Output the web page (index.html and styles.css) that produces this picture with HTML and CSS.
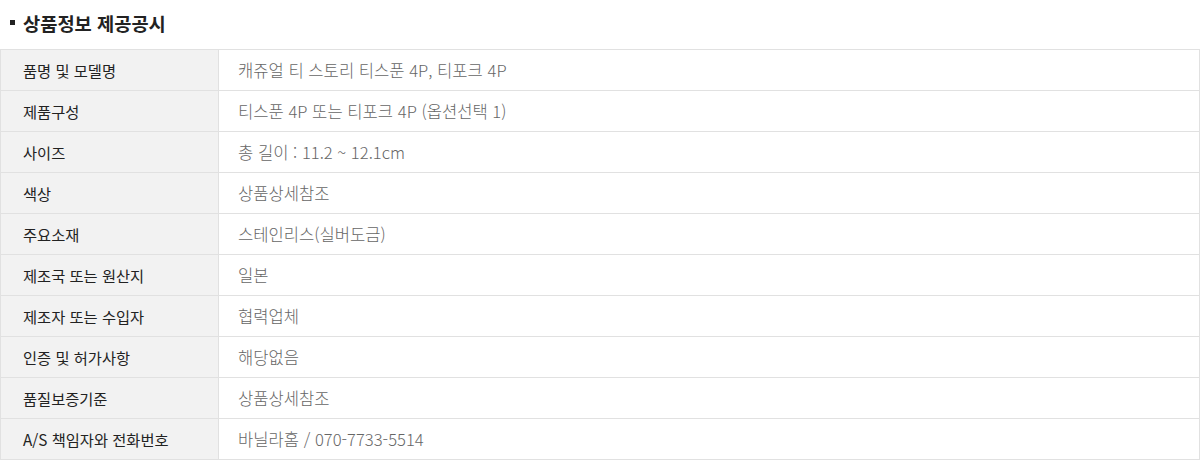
FILE: index.html
```html
<!DOCTYPE html>
<html lang="ko">
<head>
<meta charset="utf-8">
<link rel="stylesheet" href="styles.css">
</head>
<body>
<div class="wrap">
  <h2 class="title"><span class="bullet"></span>상품정보 제공공시</h2>
  <table class="info">
    <tr><th>품명 및 모델명</th><td>캐쥬얼 티 스토리 티스푼 4P, 티포크 4P</td></tr>
    <tr><th>제품구성</th><td>티스푼 4P 또는 티포크 4P (옵션선택 1)</td></tr>
    <tr><th>사이즈</th><td>총 길이 : 11.2 ~ 12.1cm</td></tr>
    <tr><th>색상</th><td>상품상세참조</td></tr>
    <tr><th>주요소재</th><td>스테인리스(실버도금)</td></tr>
    <tr><th>제조국 또는 원산지</th><td>일본</td></tr>
    <tr><th>제조자 또는 수입자</th><td>협력업체</td></tr>
    <tr><th>인증 및 허가사항</th><td>해당없음</td></tr>
    <tr><th>품질보증기준</th><td>상품상세참조</td></tr>
    <tr><th>A/S 책임자와 전화번호</th><td>바닐라홈 / 070-7733-5514</td></tr>
  </table>
</div>
</body>
</html>
```
FILE: styles.css
```css
html, body { margin: 0; padding: 0; background: #fff; }
body { font-family: "Noto Sans CJK KR", "Noto Sans", sans-serif; }
.wrap { padding-top: 10px; }
.title {
  margin: 0 0 14px 0;
  font-size: 18.7px;
  font-weight: 700;
  color: #222;
  line-height: 25px;
  display: flex;
  align-items: center;
  padding-left: 10px;
}
.bullet {
  display: inline-block;
  width: 5px;
  height: 5px;
  background: #222;
  margin-right: 8px;
}
.info {
  width: 100%;
  border-collapse: collapse;
  border: 1px solid #e1e1e1;
}
.info th, .info td {
  border: 1px solid #e1e1e1;
  height: 40px;
  padding: 0;
  font-size: 16px;
  font-weight: 300;
  text-align: left;
  vertical-align: middle;
  line-height: 20px;
}
.info th {
  width: 195px;
  padding-left: 22px;
  background: #f2f2f2;
  color: #222;
  font-size: 15.3px;
  font-weight: 400;
}
.info td {
  padding-left: 19px;
  color: #666;
  font-size: 16.6px;
}
```
